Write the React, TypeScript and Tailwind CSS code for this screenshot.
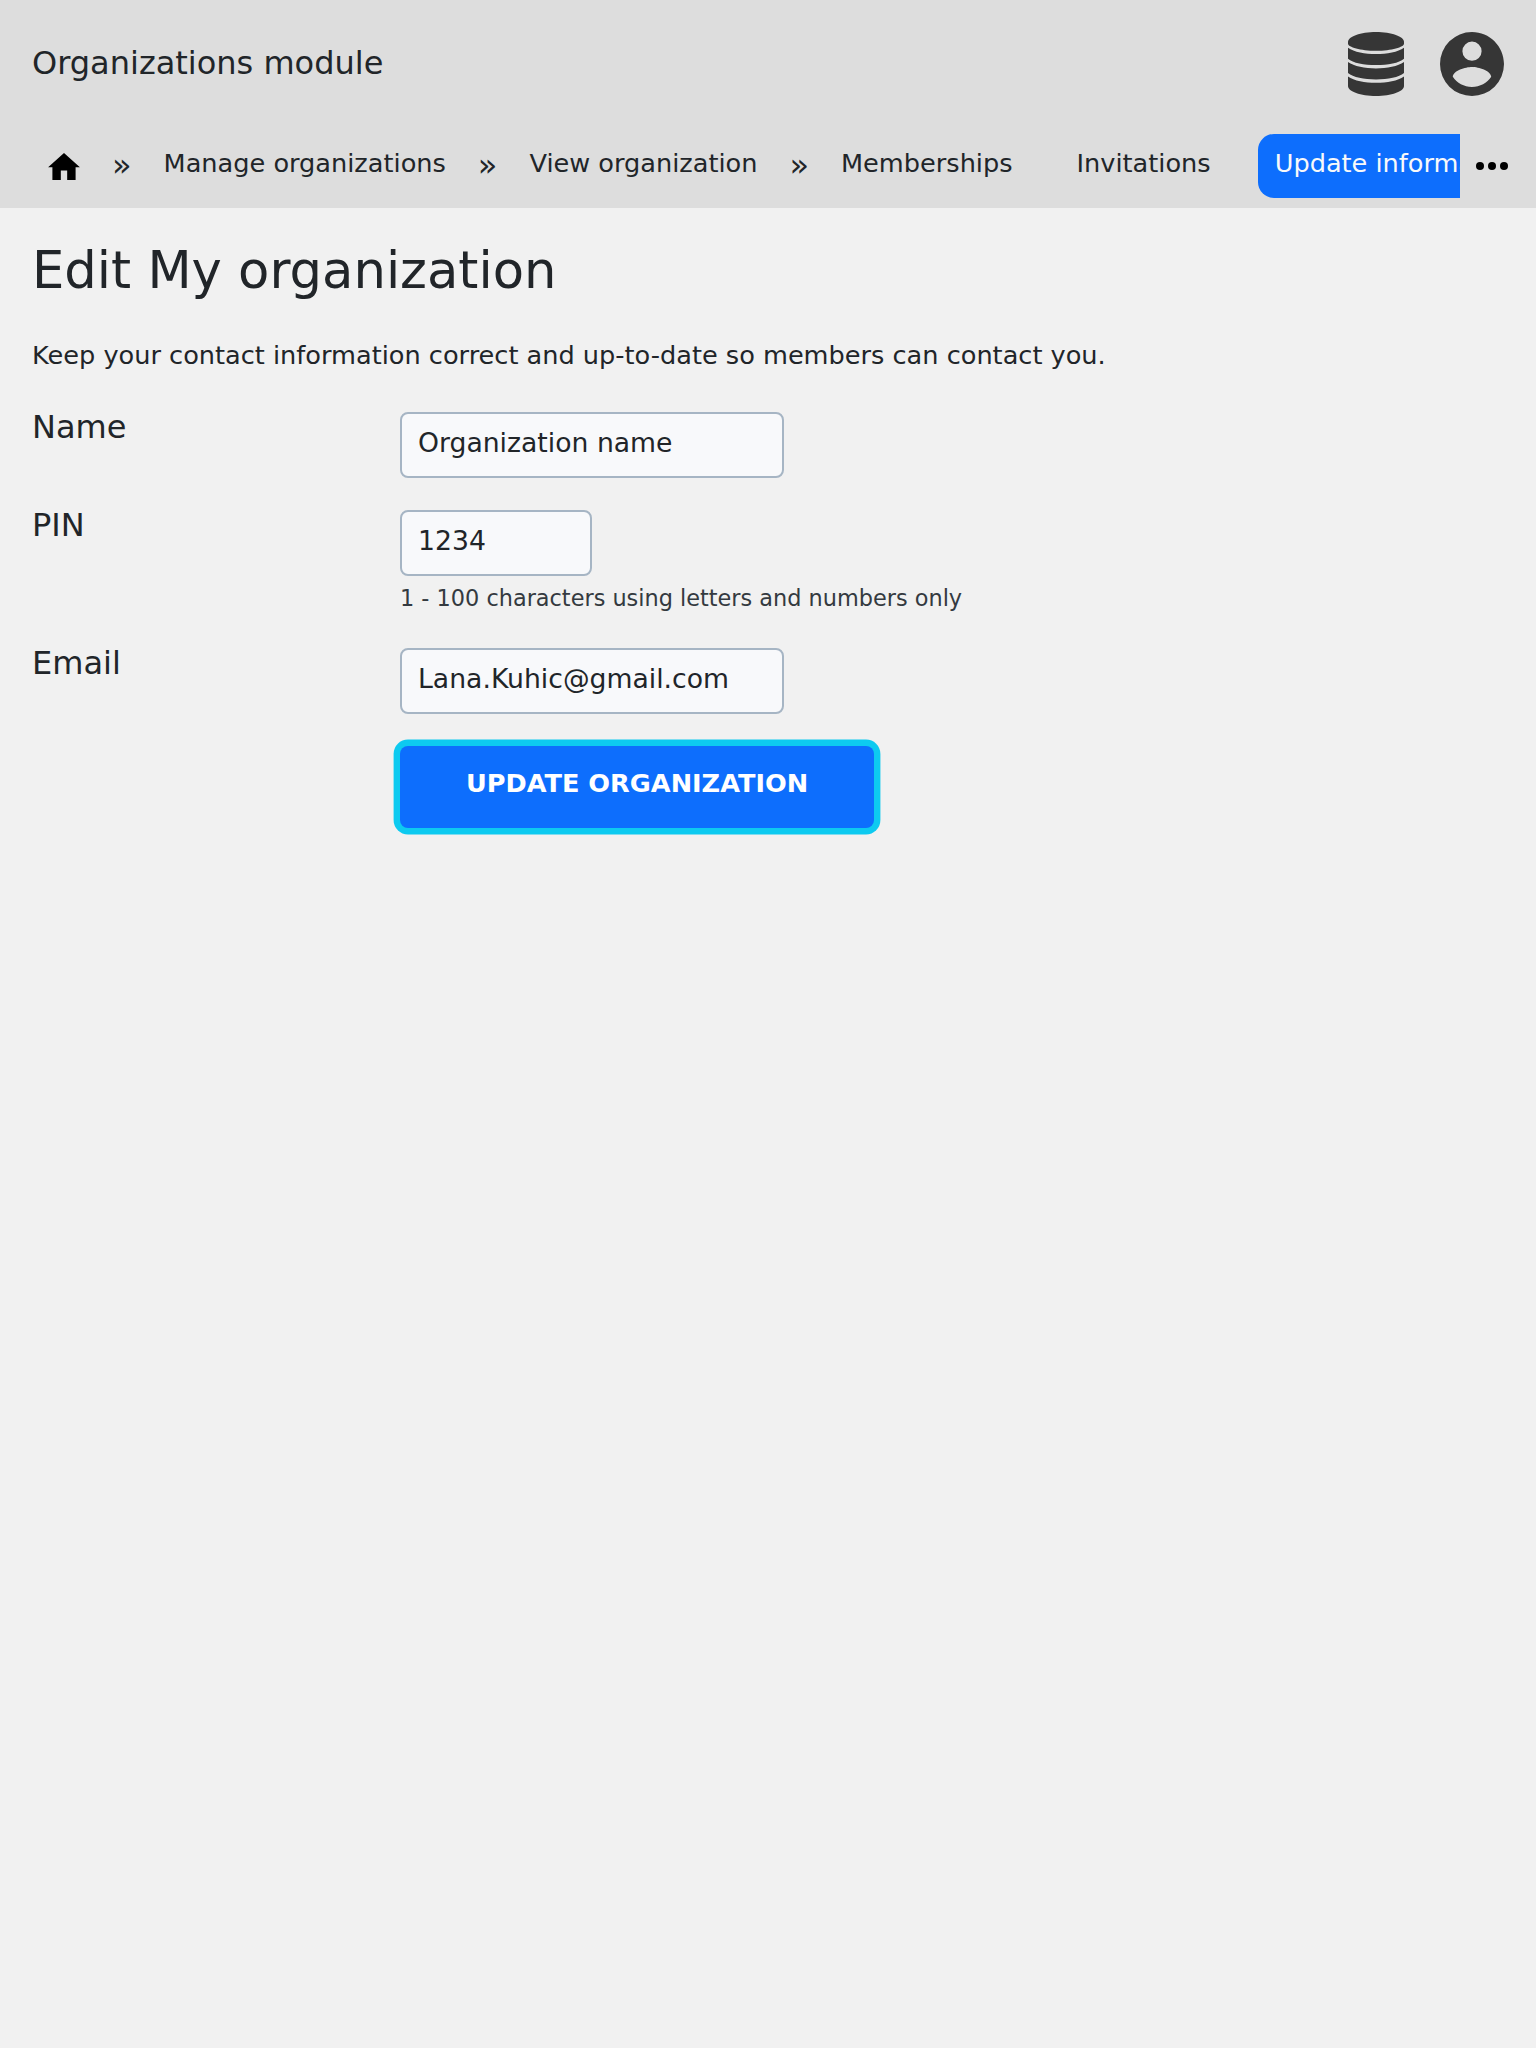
import React from "react";

function DatabaseIcon() {
  return (
    <svg viewBox="0 0 56 64" className="h-16 w-14" fill="#363636">
      <path d="M0 10C0 4.500 12.500 0 28 0s28 4.500 28 10v1.700C56 15 43.500 18.800 28 18.800S0 15 0 11.700z" />
      <path d="M0 15.700C6 20 17 22 28 22s22-2 28-6.300v11C51 31 40 33 28 33S5 31 0 26.700z" />
      <path d="M0 30.100c6 4.300 17 6.300 28 6.300s22-2 28-6.300v11c-5 4.300-16 6.400-28 6.400S5 45.400 0 41.100z" />
      <path d="M0 44.500c6 4.300 17 6.300 28 6.300s22-2 28-6.300V54c0 5.500-12.500 10-28 10S0 59.500 0 54z" />
    </svg>
  );
}

function AccountIcon() {
  return (
    <svg viewBox="2 2 20 20" className="size-16" fill="#363636">
      <path d="M12 19.2C9.5 19.2 7.29 17.92 6 16C6.03 14 10 12.9 12 12.9C14 12.9 17.97 14 18 16C16.71 17.92 14.5 19.2 12 19.2M12 5A3 3 0 0 1 15 8A3 3 0 0 1 12 11A3 3 0 0 1 9 8A3 3 0 0 1 12 5M12 2A10 10 0 0 0 2 12A10 10 0 0 0 12 22A10 10 0 0 0 22 12C22 6.47 17.5 2 12 2Z" />
    </svg>
  );
}

const Sep = () => (
  <span className="flex h-16 shrink-0 items-center px-4 pb-0.5 text-[32px] leading-8">»</span>
);

function Tab({ children, active }: { children: React.ReactNode; active?: boolean }) {
  return (
    <a
      className={
        active
          ? "ml-[31px] h-16 shrink-0 rounded-2xl bg-[#0d6efd] pt-[9px] pr-4 pl-[17px] text-[25.6px] leading-[40px] whitespace-nowrap text-[#f8f9fa]"
          : "h-16 shrink-0 rounded-2xl px-4 pt-[9px] text-[25.6px] leading-[40px] whitespace-nowrap"
      }
    >
      {children}
    </a>
  );
}

function Row({ label, value, short, hint }: { label: string; value: string; short?: boolean; hint?: string }) {
  return (
    <div className="flex">
      <label className="-mt-px w-[368px] shrink-0 text-[32px] leading-[32px]">{label}</label>
      <div>
        <input
          defaultValue={value}
          className={
            short
              ? "block h-[66px] w-48 rounded-lg border-2 border-[#a6b5c4] bg-[#f8f9fb] px-4 pb-1.5 text-[26.667px] outline-none"
              : "block h-[66px] w-96 rounded-lg border-2 border-[#a6b5c4] bg-[#f8f9fb] px-4 pb-1.5 text-[26.667px] outline-none"
          }
        />
        {hint && <p className="mt-1.5 h-[34px] text-[22.4px] leading-8 text-[#343a40]">{hint}</p>}
      </div>
    </div>
  );
}

export default function App() {
  return (
    <div className="h-[2048px] w-full overflow-hidden bg-[#f1f1f1] font-['DejaVu_Sans',sans-serif] text-[#212529]">
      <header className="h-[208px] bg-[#dddddd]">
        <div className="flex h-32 items-center justify-between px-8">
          <span className="pb-0.5 text-[32px] leading-[48px]">Organizations module</span>
          <div className="flex items-center gap-9">
            <DatabaseIcon />
            <AccountIcon />
          </div>
        </div>
        <nav className="mt-1.5 flex h-16">
          <div className="flex w-[1460px] shrink-0 overflow-hidden pl-8">
            <a className="flex h-16 w-16 shrink-0 items-center justify-center">
              <svg viewBox="2 3 20 17" className="h-[27px] w-8" fill="#000">
                <path d="M10 20V14H14V20H19.3V12H22L12 3L2 12H4.7V20H10Z" />
              </svg>
            </a>
            <Sep />
            <Tab>Manage organizations</Tab>
            <Sep />
            <Tab>View organization</Tab>
            <Sep />
            <Tab>Memberships</Tab>
            <span className="w-8 shrink-0" />
            <Tab>Invitations</Tab>
            <Tab active>Update information</Tab>
          </div>
          <button className="flex h-16 flex-1 items-center pl-4">
            <svg viewBox="4 10 16 4" className="h-2 w-8" fill="#000">
              <circle cx="6" cy="12" r="2" />
              <circle cx="12" cy="12" r="2" />
              <circle cx="18" cy="12" r="2" />
            </svg>
          </button>
        </nav>
      </header>
      <main className="px-8 pt-8">
        <h1 className="text-[51.2px] leading-[61px]">Edit My organization</h1>
        <p className="mt-[35px] text-[25.6px] leading-[38px]">
          Keep your contact information correct and up-to-date so members can contact you.
        </p>
        <form className="mt-[38px] flex flex-col gap-8">
          <Row label="Name" value="Organization name" />
          <Row label="PIN" value="1234" short hint="1 - 100 characters using letters and numbers only" />
          <Row label="Email" value="Lana.Kuhic@gmail.com" />
          <button
            type="button"
            className="ml-[368px] h-[82px] w-[474px] rounded-lg bg-[#0d6efd] pb-2 text-[25.6px] font-bold text-white ring-[6.4px] ring-[#0dcaf0]"
          >
            UPDATE ORGANIZATION
          </button>
        </form>
      </main>
    </div>
  );
}
